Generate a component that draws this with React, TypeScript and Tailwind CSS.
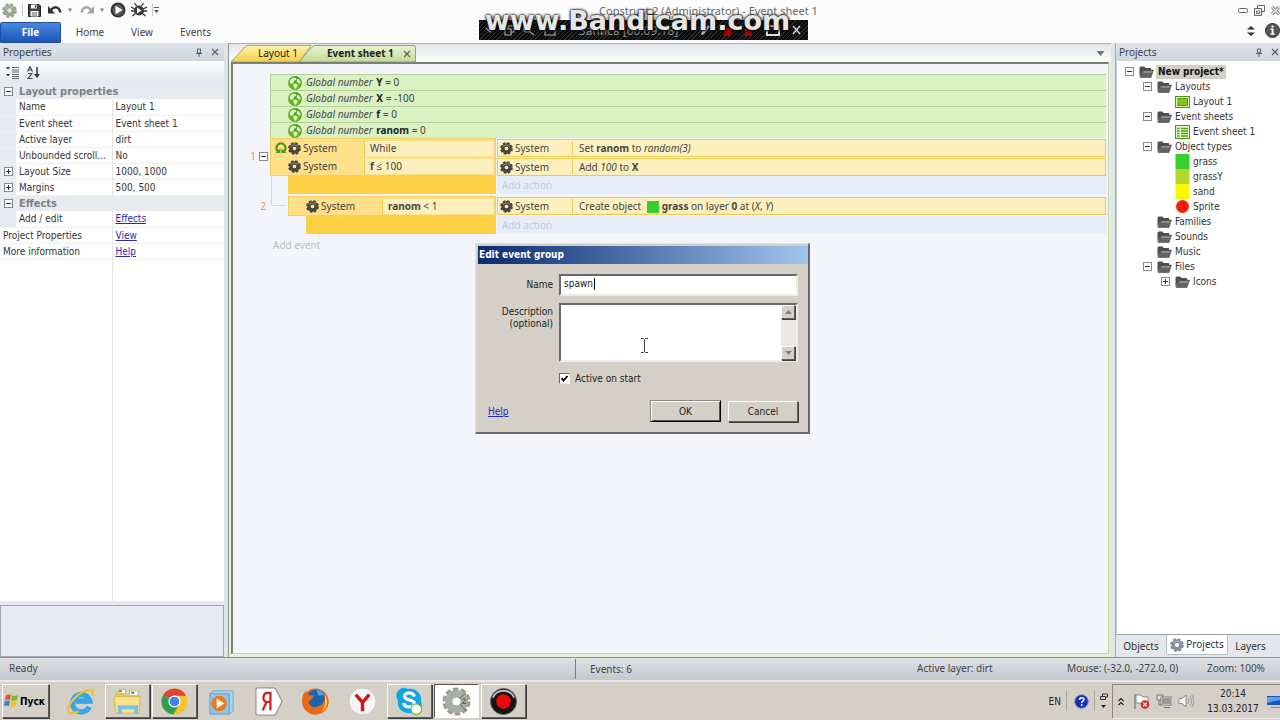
import React, { useState } from 'react';

const RAISED = 'border border-t-white border-l-white border-r-[#606060] border-b-[#606060] shadow-[1px_1px_0_#404040]';

function Gear({ size = 13, body = '#4a4540', hole = '#fdeab0' }: { size?: number; body?: string; hole?: string }) {
  return (
    <svg width={size} height={size} viewBox="0 0 26 26" className="shrink-0">
      <circle cx="13" cy="13" r="10.5" fill="none" stroke={body} strokeWidth="4.6" strokeDasharray="5 3.247" />
      <circle cx="13" cy="13" r="7" fill="none" stroke={body} strokeWidth="7" />
      <path d="M6.500 10a7.200 7.200 0 0 1 13 0" fill="none" stroke="#ffffff" strokeOpacity=".28" strokeWidth="2.400" />
      <circle cx="13" cy="13" r="3.400" fill={hole} />
    </svg>
  );
}

function Globe() {
  return (
    <svg width="14" height="14" viewBox="0 0 28 28" className="shrink-0">
      <defs><linearGradient id="globe" x2="0" y2="1"><stop stopColor="#3f8f1c" /><stop offset="1" stopColor="#6cc21c" /></linearGradient></defs>
      <circle cx="14" cy="14" r="13.300" fill="url(#globe)" stroke="#4b9a22" />
      <path d="M3 12C4 7 7 4 11 3l5 1 1 3-4 2-2 4-3 3-3-1z" fill="#e2f7c8" />
      <path d="M19 5l4 3 2 5-1 3-4-2-3-4zM13 15l5 1 2 3-3 4-3 3-2-4-2-4z" fill="#e2f7c8" />
    </svg>
  );
}

function Loop() {
  return (
    <svg width="12" height="12" viewBox="0 0 24 24" className="shrink-0">
      <path d="M8 20A9 9 0 1 1 16 20" fill="none" stroke="#4c9a14" strokeWidth="4.500" />
      <path d="M1 22h10v-9zM23 22H13v-9z" fill="#4c9a14" />
    </svg>
  );
}

function Folder() {
  return (
    <svg width="15" height="12" viewBox="0 0 30 24" className="shrink-0">
      <path d="M1 22V3l2-2h8l2 3h11v5H8z" fill="#4f4f4f" />
      <path d="M2 23L8 8h21l-5 15z" fill="#636363" stroke="#383838" />
      <path d="M9.500 10h17l-1.500 4H8z" fill="#8b8b8b" />
    </svg>
  );
}

function Expander({ open, label }: { open: boolean; label: string }) {
  return (
    <button aria-label={label} className="flex size-[9px] shrink-0 items-center justify-center border border-[#8a8a8a] bg-white">
      <svg width="5" height="5" viewBox="0 0 5 5">
        <path d={open ? 'M0 2.500h5' : 'M0 2.500h5M2.500 0v5'} stroke="#333" />
      </svg>
    </button>
  );
}

function Pin() {
  return (
    <svg width="8" height="9" viewBox="0 0 8 9">
      <path d="M2.500 1h3v4h-3zM1 5.500h6M4 6v3M5.500 1v4" fill="none" stroke="#5b6068" />
    </svg>
  );
}

function Cross({ size = 8, color = '#5b6068' }: { size?: number; color?: string }) {
  return (
    <svg width={size} height={size} viewBox="0 0 8 8">
      <path d="M1 1l6 6M7 1L1 7" stroke={color} strokeWidth="1.2" />
    </svg>
  );
}

function PanelHeader({ title }: { title: string }) {
  return (
    <header className="flex h-[18px] shrink-0 items-center gap-2 bg-linear-to-b from-[#dde2e8] to-[#cfd6dd] pl-[3px] pr-[5px] text-[#3c434c]">
      <h2 className="flex-1 whitespace-nowrap">{title}</h2>
      <button aria-label={`Pin ${title}`}><Pin /></button>
      <button aria-label={`Close ${title}`}><Cross /></button>
    </header>
  );
}

function TitleBar() {
  return (
    <div className="relative flex h-5 shrink-0 items-center pl-[2px] text-[#333]">
      <div className="flex items-center gap-[5px]">
        <Gear size={15} body="#9ba392" hole="#e4e8dc" />
        <span className="h-3 w-px bg-[#ccc]" />
        <button aria-label="Save">
          <svg width="13" height="13" viewBox="0 0 13 13">
            <path d="M.5.5h10.500l1.500 1.500v10.500H.5z" fill="#444" stroke="#222" />
            <path d="M3 .5h6v4H3zM2.500 7h8v5.500h-8z" fill="#f4f4f4" />
            <path d="M7 1.200h1.300v2.500H7z" fill="#333" />
            <path d="M4 9h5M4 11h5" stroke="#666" />
          </svg>
        </button>
        <button aria-label="Undo" className="pl-[2px]">
          <svg width="14" height="10" viewBox="0 0 14 10">
            <path d="M3 5c3-4 8-4 9.500 2.500" fill="none" stroke="#333" strokeWidth="2.400" />
            <path d="M0 1v7.500h7z" fill="#333" />
          </svg>
        </button>
        <span className="text-[6px] text-[#777]">▼</span>
        <button aria-label="Redo" className="pl-[2px]">
          <svg width="14" height="10" viewBox="0 0 14 10">
            <path d="M11 5C8 1 3 1 1.500 7.500" fill="none" stroke="#a5a5a5" strokeWidth="2.400" />
            <path d="M14 1v7.500H7z" fill="#a5a5a5" />
          </svg>
        </button>
        <span className="text-[6px] text-[#777]">▼</span>
        <button aria-label="Run layout">
          <svg width="16" height="16" viewBox="0 0 16 16">
            <circle cx="8" cy="8" r="7.500" fill="#333" />
            <circle cx="8" cy="8" r="5.500" fill="#5c5c5c" />
            <path d="M5.500 3.800v8.400l7-4.200z" fill="#fff" />
          </svg>
        </button>
        <button aria-label="Debug layout">
          <svg width="16" height="16" viewBox="0 0 16 16">
            <path d="M3.500 1l2 3M12.500 1l-2 3M0 5l4 2M16 5l-4 2M0 9h16M1.500 14l3.500-3M14.500 14L11 11" stroke="#333" strokeWidth="1.300" />
            <circle cx="8" cy="8.500" r="5" fill="#3d3d3d" />
            <path d="M6 5.500v6l4.500-3z" fill="#fff" />
          </svg>
        </button>
        <svg width="7" height="12" viewBox="0 0 7 12"><path d="M.5 0v12" stroke="#ccc" /><path d="M2 3.500h5" stroke="#555" /><path d="M2 6h5L4.500 9z" fill="#555" /></svg>
      </div>
      <h1 className="flex-1 pl-[20px] text-center text-[11px] text-[#666]">Construct 2 (Administrator) - Event sheet 1</h1>
      <div className="flex items-center gap-[6px]">
        <button aria-label="Minimize"><svg width="10" height="5" viewBox="0 0 10 5"><rect x=".5" y=".5" width="9" height="4" rx="1" fill="#fff" stroke="#666" /></svg></button>
        <button aria-label="Restore">
          <svg width="11" height="11" viewBox="0 0 11 11"><path d="M3.500 3V.5h7v6H8M.5 3.500h7v7h-7zM2.500 6h3v2.500h-3z" fill="none" stroke="#666" /></svg>
        </button>
        <button aria-label="Close">
          <svg width="9" height="9" viewBox="0 0 9 9"><path d="M1 1l7 7M8 1L1 8" stroke="#666" strokeWidth="3" /><path d="M1 1l7 7M8 1L1 8" stroke="#fff" strokeWidth="1.200" /></svg>
        </button>
      </div>
    </div>
  );
}

function Ribbon() {
  return (
    <nav className="flex h-[23px] shrink-0 items-stretch pt-[2px] text-[#444]">
      <button className="w-[61px] rounded-t-[2px] border border-[#1d4fa8] bg-linear-to-b from-[#4a86dc] to-[#1c55b8] font-bold text-white">File</button>
      <button className="w-[58px]">Home</button>
      <button className="w-[46px]">View</button>
      <button className="w-[61px]">Events</button>
      <span className="flex-1" />
      <div className="flex items-center gap-[10px] pb-1">
        <svg width="8" height="12" viewBox="0 0 8 12"><path d="M0 4.500h8L4 1zM0 7.500h8L4 11z" fill="#333" /></svg>
        <button aria-label="About">
          <svg width="15" height="15" viewBox="0 0 15 15">
            <circle cx="7.500" cy="7.500" r="7" fill="#555" stroke="#333" />
            <path d="M6.500 2.500h2v2h-2zM5.500 5.500h3v5h1.200v1.300H5.400v-1.300h1.200V6.800H5.500z" fill="#fff" />
          </svg>
        </button>
      </div>
    </nav>
  );
}

type Prop = { name: string; value?: string; kind?: 'group' | 'sub' | 'link' | 'flatlink' };
const PROPS: Prop[] = [
  { name: 'Layout properties', kind: 'group' },
  { name: 'Name', value: 'Layout 1' },
  { name: 'Event sheet', value: 'Event sheet 1' },
  { name: 'Active layer', value: 'dirt' },
  { name: 'Unbounded scroll...', value: 'No' },
  { name: 'Layout Size', value: '1000, 1000', kind: 'sub' },
  { name: 'Margins', value: '500, 500', kind: 'sub' },
  { name: 'Effects', kind: 'group' },
  { name: 'Add / edit', value: 'Effects', kind: 'link' },
  { name: 'Project Properties', value: 'View', kind: 'flatlink' },
  { name: 'More information', value: 'Help', kind: 'flatlink' },
];

function PropertiesPanel() {
  return (
    <aside className="flex w-[224px] shrink-0 flex-col bg-[#e7eaee]">
      <PanelHeader title="Properties" />
      <div className="flex h-[22px] shrink-0 items-center gap-2 bg-linear-to-b from-white to-[#e4e8ed] pl-[6px]">
        <button aria-label="Categorized">
          <svg width="13" height="13" viewBox="0 0 13 13"><path d="M0 1h4L2 3.500zM0 8h4L2 10.500z" fill="#333" /><path d="M6 1.500h7M6 4h7M6 6h7M6 8.500h7M6 10.500h7M6 12.500h7" stroke="#666" /></svg>
        </button>
        <button aria-label="Sort alphabetically">
          <svg width="13" height="13" viewBox="0 0 13 13"><path d="M.5 5.500L3 .5l2.500 5M1.500 4h3M1 7.500h4l-4 5h4.500" fill="none" stroke="#444" strokeWidth="1.200" /><path d="M10 1v8" stroke="#333" strokeWidth="1.500" /><path d="M7 8h6l-3 4z" fill="#333" /></svg>
        </button>
      </div>
      <div className="flex flex-1 flex-col bg-white font-['DejaVu_Sans_Condensed','DejaVu_Sans',sans-serif] text-[#333]">
        <table className="w-full table-fixed border-collapse">
          <colgroup><col className="w-4" /><col className="w-24" /><col /></colgroup>
          <tbody>
            {PROPS.map((p) =>
              p.kind === 'group' ? (
                <tr key={p.name} className="h-4 bg-[#e7eaee] text-[#7b8188]">
                  <td className="pl-1"><Expander open label={`Collapse ${p.name}`} /></td>
                  <th colSpan={2} className="pl-[3px] text-left text-[11px] leading-[15px]">{p.name}</th>
                </tr>
              ) : p.kind === 'flatlink' ? (
                <tr key={p.name} className="h-4 border-b border-[#eef0f2]">
                  <td colSpan={2} className="pl-[3px] leading-[15px]">{p.name}</td>
                  <td className="border-l border-[#e2e5e8] pl-[3px] leading-[15px]"><a href="#" className="text-[#2a2ab0] underline">{p.value}</a></td>
                </tr>
              ) : (
                <tr key={p.name} className="h-4 border-b border-[#eef0f2]">
                  <td className="bg-[#e7eaee] pl-1">{p.kind === 'sub' && <Expander open={false} label={`Expand ${p.name}`} />}</td>
                  <td className="whitespace-nowrap pl-[3px] leading-[15px]">{p.name}</td>
                  <td className="border-l border-[#e2e5e8] pl-[3px] leading-[15px]">
                    {p.kind === 'link' ? <a href="#" className="text-[#2a2ab0] underline">{p.value}</a> : p.value}
                  </td>
                </tr>
              ),
            )}
          </tbody>
        </table>
        <div className="ml-28 flex-1 border-l border-[#e2e5e8]" />
      </div>
      <div className="mt-1 h-[52px] shrink-0 border border-[#a3a9b0] bg-[#e7eaee]" />
    </aside>
  );
}

function Action({ children }: { children: React.ReactNode }) {
  return (
    <div className="flex h-[18px] items-center border border-[#ecc954] bg-[#fdf0bd]">
      <span className="flex w-[74px] items-center gap-[2px] pl-[2px]"><Gear />System</span>
      <span className="block h-[14px] flex-1 whitespace-pre border-l border-[#ecc954] pl-[6px] leading-[14px]">{children}</span>
    </div>
  );
}

function Condition({ loop, children }: { loop?: boolean; children: React.ReactNode }) {
  return (
    <div className="flex h-[18px] items-center">
      <span className="flex h-full w-[93px] items-center pl-1">
        <span className="w-[13px]">{loop && <Loop />}</span>
        <Gear hole="#ffe398" />
        <span className="pl-[2px]">System</span>
      </span>
      <span className="mr-px block h-[17px] flex-1 whitespace-pre border border-[#fbe08c] border-l-[#ecc954] bg-[#fdf0bd] pl-[5px] leading-[15px]">{children}</span>
    </div>
  );
}

function AddAction() {
  return (
    <button className="block h-[18px] w-full bg-[#e6edf8] pl-[5px] text-left text-[#c3ccd8]">Add action</button>
  );
}

const GLOBALS = [['Y', '0'], ['X', '-100'], ['f', '0'], ['ranom', '0']];

function EventSheet() {
  return (
    <main className="flex min-w-0 flex-1 flex-col border-l border-[#8b949e] bg-[#e9f0d8]">
      <div className="flex h-[19px] shrink-0 items-end border-t border-[#a9afb7] bg-linear-to-b from-[#e2e5ea] to-white pl-[2px] pr-[6px] text-[#222]">
        <div role="tablist" className="flex">
          <button role="tab" aria-selected="false" className="relative h-[17px] w-[84px]">
            <svg width="84" height="17" viewBox="0 0 84 17" className="absolute inset-0">
              <defs><linearGradient id="tabY" x2="0" y2="1"><stop stopColor="#fff3a8" /><stop offset="1" stopColor="#f4ce4a" /></linearGradient></defs>
              <path d="M0 17L14 2Q15 .5 17 .5H80L68 17z" fill="url(#tabY)" stroke="#a8a27c" />
            </svg>
            <span className="relative pl-[10px]">Layout 1</span>
          </button>
          <button role="tab" aria-selected="true" className="relative -ml-4 h-[17px] w-[117px] text-left">
            <svg width="117" height="17" viewBox="0 0 117 17" className="absolute inset-0">
              <defs><linearGradient id="tabG" x2="0" y2="1"><stop stopColor="#e8f6cd" /><stop offset="1" stopColor="#c2d89c" /></linearGradient></defs>
              <path d="M0 17L13 2Q14 .5 16 .5H114q2.500 0 2.500 2V17z" fill="url(#tabG)" stroke="#94a07f" />
            </svg>
            <span className="relative flex items-center justify-between pl-[28px] pr-[5px] font-bold">Event sheet 1 <Cross size={8} /></span>
          </button>
        </div>
        <span className="flex-1" />
        <svg width="9" height="5" viewBox="0 0 8 5" className="mb-[6px]"><path d="M0 0h8L4 5z" fill="#6d737b" /></svg>
      </div>
      <div className="mx-[2px] mb-[3px] flex-1 border-l-2 border-t-2 border-r border-b border-[#7a8275] border-b-[#c4cfb4] border-r-[#c4cfb4] bg-[#f3f5fb] pt-[10px] pr-[2px] text-[#444]">
        <div className="ml-[37px] border-l border-[#b8d29c]">
          {GLOBALS.map(([n, v]) => (
            <div key={n} className="flex h-4 items-center gap-1 border-t border-[#b3d396] bg-[#d9f1c3] pl-[17px]">
              <Globe />
              <span className="whitespace-pre"><i>Global number</i>{' '}<b className="pl-px text-[#222]">{n}</b>{' = '}{v}</span>
            </div>
          ))}
        </div>
        <div className="flex">
          <div className="flex w-[37px] shrink-0 items-center justify-end gap-[3px] pr-[2px] pb-[22px] text-[#d7a33e]">
            1<Expander open label="Collapse event 1" />
          </div>
          <div className="w-[226px] shrink-0">
            <div className="h-[38px] border border-[#f4cd5c] bg-[#fedf8a]">
              <Condition loop>While</Condition>
              <Condition><b>f</b> ≤ 100</Condition>
            </div>
            <div className="ml-px h-5 border-l border-[#d4d7dc] pl-4"><div className="h-[18px] bg-[#fdd045]" /></div>
          </div>
          <div className="ml-px flex min-w-0 flex-1 flex-col">
            <div className="flex h-[38px] flex-col gap-px pt-px">
              <Action>Set <b>ranom</b> to <i>random(3)</i></Action>
              <Action>Add <i>100</i> to <b>X</b></Action>
            </div>
            <AddAction />
          </div>
        </div>
        <div className="flex">
          <div className="w-[37px] shrink-0 pr-1 text-right leading-5 text-[#d7a33e]">2</div>
          <div className="ml-px mr-[2px] h-[10px] w-[15px] shrink-0 border-b border-l border-[#d4d7dc]" />
          <div className="w-[208px] shrink-0">
            <div className="border border-[#f4cd5c] bg-[#fedf8a]"><Condition><b>ranom</b>{' < 1'}</Condition></div>
            <div className="ml-[18px] h-[18px] bg-[#fdd045]" />
          </div>
          <div className="ml-px min-w-0 flex-1">
            <div className="h-5 py-px">
              <Action>Create object <span className="mx-[3px] inline-block size-3 bg-[#37cf2d] align-middle" /><b>grass</b> on layer <b>0</b> at (<i>X</i>, <i>Y</i>)</Action>
            </div>
            <AddAction />
          </div>
        </div>
        <button className="ml-10 mt-1 text-[#b9bfc9]">Add event</button>
      </div>
    </main>
  );
}

type Node = { depth: number; label: string; icon: string; open?: boolean };
const TREE: Node[] = [
  { depth: 0, label: 'New project*', icon: 'folder', open: true },
  { depth: 1, label: 'Layouts', icon: 'folder', open: true },
  { depth: 2, label: 'Layout 1', icon: 'layout' },
  { depth: 1, label: 'Event sheets', icon: 'folder', open: true },
  { depth: 2, label: 'Event sheet 1', icon: 'sheet' },
  { depth: 1, label: 'Object types', icon: 'folder', open: true },
  { depth: 2, label: 'grass', icon: '#37cf2d' },
  { depth: 2, label: 'grassY', icon: '#b2d82c' },
  { depth: 2, label: 'sand', icon: '#f8f800' },
  { depth: 2, label: 'Sprite', icon: 'ball' },
  { depth: 1, label: 'Families', icon: 'folder' },
  { depth: 1, label: 'Sounds', icon: 'folder' },
  { depth: 1, label: 'Music', icon: 'folder' },
  { depth: 1, label: 'Files', icon: 'folder', open: true },
  { depth: 2, label: 'Icons', icon: 'folder', open: false },
];
const INDENT = ['pl-2', 'pl-[26px]', 'pl-11'];

function TreeIcon({ icon }: { icon: string }) {
  if (icon === 'folder') return <Folder />;
  if (icon === 'layout')
    return <svg width="15" height="12" viewBox="0 0 15 12"><rect x=".5" y=".5" width="14" height="11" fill="#d6f2a8" stroke="#4c9420" /><rect x="3" y="2.500" width="9.500" height="7" fill="#85c31c" stroke="#579a12" /></svg>;
  if (icon === 'sheet')
    return <svg width="15" height="14" viewBox="0 0 15 14"><rect x=".5" y=".5" width="14" height="13" fill="#e6f8cc" stroke="#4c9420" /><path d="M2 3.500h2.500M6 3.500h7M2 6h2.500M6 6h7M2 8.500h2.500M6 8.500h7M2 11h2.500M6 11h7" stroke="#4f9e14" strokeWidth="1.400" /></svg>;
  if (icon === 'ball')
    return <svg width="15" height="15" viewBox="0 0 15 15"><circle cx="7.500" cy="7.500" r="6.500" fill="#f0200c" /><circle cx="8.500" cy="5" r="1" fill="#a80d00" /><circle cx="9.500" cy="9" r=".8" fill="#a80d00" /></svg>;
  return <svg width="15" height="15" viewBox="0 0 15 15"><path d="M.5 0h14v15H.5z" fill={icon} /></svg>;
}

function ProjectsPanel() {
  return (
    <aside className="flex w-[165px] shrink-0 flex-col border-l border-[#a3abb5] bg-[#e4e8ec]">
      <div className="-mr-1"><PanelHeader title="Projects" /></div>
      <ul className="flex-1 border-b border-[#9aa1a9] border-l border-l-[#c3c9d0] bg-white pt-[3px] font-['DejaVu_Sans_Condensed','DejaVu_Sans',sans-serif] text-[#333]">
        {TREE.map((n) => (
          <li key={n.label} className={`flex h-[15px] items-center ${INDENT[n.depth]}`}>
            <span className="flex w-[14px] shrink-0">{n.open !== undefined && <Expander open={n.open} label={`Toggle ${n.label}`} />}</span>
            <TreeIcon icon={n.icon} />
            {n.depth === 0 ? (
              <strong className="ml-[2px] whitespace-nowrap bg-[#d2cfc9] px-[2px] leading-[14px] text-[#111]">{n.label}</strong>
            ) : (
              <span className="ml-[3px] whitespace-nowrap">{n.label}</span>
            )}
          </li>
        ))}
      </ul>
      <div role="tablist" className="flex h-[22px] shrink-0 items-start text-[#333]">
        <button role="tab" className="h-[22px] w-[50px]">Objects</button>
        <button role="tab" aria-selected="true" className="flex h-[20px] w-[62px] items-center justify-center gap-[2px] rounded-b-[2px] border border-t-0 border-[#b6bbc2] bg-white">
          <Gear size={14} body="#8a8aa4" hole="#fff" />Projects
        </button>
        <button role="tab" className="h-[22px] w-[45px]">Layers</button>
      </div>
    </aside>
  );
}

function EditGroupDialog() {
  const [name, setName] = useState('spawn');
  const [desc, setDesc] = useState('');
  const [active, setActive] = useState(true);
  const sunken = 'border-2 border-t-[#6a6a6a] border-l-[#6a6a6a] border-r-[#efece6] border-b-[#efece6]';
  return (
    <section role="dialog" aria-labelledby="dlg-title" className="absolute left-[475px] top-[243px] w-[335px] border border-[#e4e1da] border-r-2 border-b-2 border-r-[#6a6a6a] border-b-[#6a6a6a] bg-[#d4d0c8] p-[2px] pb-[10px] pr-0 font-['DejaVu_Sans_Condensed','DejaVu_Sans',sans-serif] text-[#222]">
      <h2 id="dlg-title" className="h-[18px] bg-linear-to-r from-[#0d2a70] to-[#a3c6ee] pl-px leading-[18px] font-bold text-white">Edit event group</h2>
      <form className="pl-[9px] pr-[10px] pt-[10px]" onSubmit={(e) => e.preventDefault()}>
        <div className="grid grid-cols-[66px_1fr] gap-x-[6px] gap-y-[7px]">
          <label htmlFor="g-name" className="pt-[3px] text-right">Name</label>
          <div className="relative">
            <input id="g-name" value={name} onChange={(e) => setName(e.target.value)} className={`block h-[22px] w-full rounded-none bg-white px-[3px] pb-[3px] outline-none ${sunken}`} />
            <span className="absolute left-[35px] top-1 h-3 w-px bg-black" />
          </div>
          <label htmlFor="g-desc" className="pt-[3px] text-right leading-3">Description<br />(optional)</label>
          <div className={`flex h-[59px] bg-white ${sunken}`}>
            <textarea id="g-desc" value={desc} onChange={(e) => setDesc(e.target.value)} className="block flex-1 resize-none overflow-hidden outline-none" />
            <div className="flex w-[15px] flex-col justify-between bg-[#ebe9e4]">
              <button type="button" aria-label="Scroll up" className={`flex h-[14px] w-[14px] items-center justify-center bg-[#d4d0c8] ${RAISED}`}><svg width="7" height="4" viewBox="0 0 7 4"><path d="M0 4h7L3.500 0z" fill="#808080" /></svg></button>
              <button type="button" aria-label="Scroll down" className={`flex h-[14px] w-[14px] items-center justify-center bg-[#d4d0c8] ${RAISED}`}><svg width="7" height="4" viewBox="0 0 7 4"><path d="M0 0h7L3.500 4z" fill="#808080" /></svg></button>
            </div>
          </div>
          <span />
          <label className="flex items-center gap-[5px] pt-[2px]">
            <input type="checkbox" checked={active} onChange={(e) => setActive(e.target.checked)} className="peer size-[11px] appearance-none border border-[#efece6] border-l-[#6a6a6a] border-t-[#6a6a6a] bg-white" />
            <svg width="9" height="9" viewBox="0 0 9 9" className="-ml-[15px] mr-[1px] hidden peer-checked:block"><path d="M1.500 4l2 2.500L7.500 2" fill="none" stroke="#000" strokeWidth="1.800" /></svg>
            Active on start
          </label>
        </div>
        <div className="flex items-center gap-[7px] pl-px pt-[14px]">
          <a href="#" className="flex-1 text-[#2a2ab0] underline">Help</a>
          <button type="submit" className="h-[22px] w-[71px] border border-[#888] border-b-black border-r-black bg-[#d4d0c8] shadow-[inset_1px_1px_0_#fff,inset_-1px_-1px_0_#555]">OK</button>
          <button type="button" className={`h-[21px] w-[70px] bg-[#d4d0c8] ${RAISED}`}>Cancel</button>
        </div>
      </form>
    </section>
  );
}

function RecorderOverlay() {
  return (
    <div className="absolute inset-x-0 top-[2px] flex justify-center pl-[7px]">
      <div className="relative mt-[18px] flex h-5 w-[329px] items-center justify-between bg-[repeating-linear-gradient(135deg,#0a0a0a_0_2px,#2b2b2b_2px_3px)] px-[6px] text-[#8a8a8a]">
        <svg width="72" height="14" viewBox="0 0 72 14" fill="none" stroke="#aaa" strokeWidth="1.200">
          <path d="M1 5l4 4 4-4M20 6h6v6h-6zM23 6V3h6v6h-3M44 8l5 4M60 4h10v8H60z" /><circle cx="42" cy="5.500" r="3.500" />
        </svg>
        <span className="text-[12px]">Запись [00:09:18]</span>
        <svg width="102" height="14" viewBox="0 0 102 14">
          <path d="M1 12l1-4 6-6 2 2-6 7z" fill="#ccc" /><path d="M24 5h7v8h-7zM45 5h7v8h-7z" fill="#a00" />
          <rect x="67" y="3" width="12" height="9" fill="none" stroke="#ddd" strokeWidth="2" /><path d="M93 3l7 8M100 3l-7 8" stroke="#ddd" strokeWidth="1.300" />
        </svg>
        <p className="absolute inset-x-0 -top-[15px] pr-3 text-center font-['DejaVu_Sans',sans-serif] text-[27px] leading-8 font-bold text-[#e6e6e6] [text-shadow:0_0_3px_#000,1px_1px_3px_#000,0_0_2px_#333]">www.Bandicam.com</p>
      </div>
    </div>
  );
}

function StatusBar() {
  return (
    <footer className="flex h-[23px] shrink-0 items-center border-t border-[#8b9199] bg-linear-to-b from-[#dfe2e6] to-[#c3c8ce] pb-px text-[#3d444c]">
      <span className="w-[575px] pl-[9px]">Ready</span>
      <span className="flex-1 border-l border-[#777e87] pl-[14px] leading-5">Events: 6</span>
      <span className="w-[150px]">Active layer: dirt</span>
      <span className="w-[140px]">Mouse: (-32.0, -272.0, 0)</span>
      <span className="w-[73px]">Zoom: 100%</span>
    </footer>
  );
}

const APPS: { label: string; state: 'idle' | 'open' | 'active'; icon: React.ReactNode }[] = [
  { label: 'Internet Explorer', state: 'idle', icon: <><path d="M24 20.500A9 9 0 1 1 24.500 14.500H10" fill="none" stroke="#35a6e6" strokeWidth="5.500" /><path d="M3 27C-1 20 12 4 26 3c3 1 2 4 0 6M3 27c3 2 8-1 10-2" fill="none" stroke="#efc02c" strokeWidth="2.400" /></> },
  { label: 'Explorer', state: 'open', icon: <><path d="M2 5h9l2 3h15v19H2z" fill="#e7c65a" /><path d="M5 3h8v4H5zM17 4h9v5h-9z" fill="#fff" stroke="#c9a940" strokeWidth=".8" /><path d="M6 3.500h3v2H6z" fill="#3c9a3c" /><path d="M19 5h3v2h-3z" fill="#3c78c8" /><path d="M1 10h27l-1 17H3z" fill="#f8e38d" stroke="#d8b850" /><path d="M7 28v-7h17v7" fill="none" stroke="#7cc0ec" strokeWidth="4" /></> },
  { label: 'Chrome', state: 'open', icon: <><circle cx="15" cy="15" r="13.500" fill="#f6c52b" /><path d="M15 15L3.300 8.300A13.500 13.500 0 0 1 26.700 8.300L27 9H15z" fill="#df4536" /><path d="M3.300 8.300A13.500 13.500 0 0 0 14 28.500l6-11L15 15z" fill="#2f9e51" /><circle cx="15" cy="15" r="6.300" fill="#fff" /><circle cx="15" cy="15" r="5" fill="#4382ee" /></> },
  { label: 'Media Player', state: 'idle', icon: <><path d="M3 7l4-3h20v21l-4 3" fill="#a8d3ee" stroke="#6fa9d0" /><path d="M3 7h20v21H3z" fill="#8ec5ea" stroke="#5f9fcc" /><circle cx="12.500" cy="17" r="8" fill="#ef7a1c" /><path d="M10 12v10l8-5z" fill="#fff" /></> },
  { label: 'Yandex', state: 'idle', icon: <><path d="M2 3q0-2 2-2h16q2 0 3 2l6 12-6 12q-1 2-3 2H4q-2 0-2-2z" fill="#fff" stroke="#999" strokeWidth="1.300" /><path d="M17 24V6h-3c-5 0-6 9-1 9.500h4M13 15.500L9 24" fill="none" stroke="#d01f1f" strokeWidth="2.300" /></> },
  { label: 'Firefox', state: 'idle', icon: <><circle cx="15" cy="15" r="13.500" fill="#e8641b" /><circle cx="16" cy="12" r="9.500" fill="#1d63ae" /><path d="M16 3a9 9 0 0 1 8 5l-6 1z" fill="#4ba7e0" /><path d="M2 8l3-4 2 4 6 1-2 4-3 2c0 5 6 8 12 4 5-3 5-9 4-12 5 5 6 12 1 17-6 6-16 6-21-1-4-5-3-10-2-15z" fill="#ea6a1a" /><path d="M24 7c5 6 4 15-3 19 4-6 5-12 3-19z" fill="#f9c83a" /></> },
  { label: 'Yandex Browser', state: 'idle', icon: <><circle cx="15" cy="15" r="14" fill="#f6f6f6" stroke="#c6c6c6" /><path d="M8 8l7 8 7-8M15 15v10" fill="none" stroke="#d3151b" strokeWidth="3.500" /></> },
  { label: 'Skype', state: 'open', icon: <><path d="M8 1a7 7 0 0 1 5 1c9-1 15 5 14 13 3 7-3 15-10 12C8 28 2 23 3 14-1 8 3 2 8 1z" fill="#12a5e4" /><path d="M20 10c-1-5-10-5-10-.5 0 5 10 3 10 7.500 0 5-10 5-11-.5" fill="none" stroke="#fff" strokeWidth="3.300" /><circle cx="22" cy="23" r="5.500" fill="#fff" stroke="#74b62c" strokeWidth="1.200" /></> },
  { label: 'Construct 2', state: 'active', icon: <><circle cx="15" cy="15" r="12.500" fill="none" stroke="#989d92" strokeWidth="4" strokeDasharray="5.500 2.354" /><circle cx="15" cy="15" r="8" fill="none" stroke="#a9aea3" strokeWidth="8" /><path d="M17 13l8-7M18 17l7 8" stroke="#62665c" /><path d="M21 13q3-2 3 .5l-3 3.500h4" fill="none" stroke="#555" /><circle cx="15" cy="15" r="4" fill="#fff" /></> },
  { label: 'Bandicam', state: 'open', icon: <><circle cx="15" cy="15" r="13.500" fill="#141414" stroke="#666" /><path d="M4 11a12 12 0 0 1 22 0" fill="none" stroke="#bbb" strokeWidth="2" /><circle cx="15" cy="15" r="7.500" fill="#ee0808" /></> },
];
const APP_STATE = {
  idle: 'border border-transparent',
  open: RAISED,
  active: 'border border-[#555] border-r-white border-b-white bg-white',
};

function Taskbar() {
  return (
    <div className="flex h-[40px] shrink-0 items-center border-t-2 border-[#ebe8e2] bg-[#d4d0c8] pl-[2px] font-['DejaVu_Sans_Condensed','DejaVu_Sans',sans-serif] text-[#222]">
      <button className={`mr-[9px] flex h-[34px] w-[47px] items-center gap-px pl-px font-bold text-black ${RAISED}`}>
        <svg width="15" height="14" viewBox="0 0 15 14" className="shrink-0">
          <path d="M2 1q3-1 5 0L6 6Q4 5 1 6z" fill="#e4572a" /><path d="M8 1.500q3 1 6-.5l-1 5q-3 1.500-6 .3z" fill="#7ab82e" /><path d="M.8 7q3-1 5 0l-1 5q-2-1-5 0z" fill="#3b82d8" /><path d="M6.800 7.500q3 1 6-.5l-1 5q-3 1.500-6 .3z" fill="#f4bf2a" />
        </svg>
        <span>Пуск</span>
      </button>
      <div className="flex gap-[2px]">
        {APPS.map((a) => (
          <button key={a.label} aria-label={a.label} className={`flex h-[34px] w-[45px] items-center justify-center ${APP_STATE[a.state]}`}>
            <svg width="29" height="29" viewBox="0 0 30 30">{a.icon}</svg>
          </button>
        ))}
      </div>
      <span className="flex-1" />
      <div className="flex items-center gap-[5px] pr-1">
        <span>EN</span>
        <span className="h-5 w-px bg-[#aaa69e]" />
        <svg width="15" height="15" viewBox="0 0 15 15" className="ml-[2px]"><circle cx="7.500" cy="7.500" r="6.800" fill="#1530b0" stroke="#7c8cc8" /><path d="M5.500 6c0-3 4.500-3 4.500-.5 0 1.500-2.300 1.500-2.300 3.500M7.700 10v2" fill="none" stroke="#fff" strokeWidth="1.500" /></svg>
        <span className="h-5 w-px bg-[#aaa69e]" />
        <svg width="8" height="16" viewBox="0 0 8 16"><path d="M2.500 3V1h5v3H6M.5 3.500h5v3h-5z" fill="none" stroke="#333" /><path d="M1 12h5l-2.500 3z" fill="#222" /></svg>
      </div>
      <div className="flex h-[35px] items-center gap-[6px] border border-t-[#8c8880] border-l-[#8c8880] border-r-0 border-[#f2f0ec] pl-[5px]">
        <svg width="6" height="9" viewBox="0 0 6 9"><path d="M.5 4L3 1.500 5.500 4M.5 8L3 5.500 5.500 8" fill="none" stroke="#222" strokeWidth="1.200" /></svg>
        <svg width="16" height="15" viewBox="0 0 16 15" className="ml-1"><path d="M1 0v15" stroke="#888" strokeWidth="1.500" /><path d="M2 1h5l2 2h5v7H8L6 9H2z" fill="#fff" stroke="#888" /><circle cx="11" cy="10.500" r="4.300" fill="#dc2626" /><path d="M9.300 8.800l3.400 3.400M12.700 8.800l-3.400 3.400" stroke="#fff" strokeWidth="1.400" /></svg>
        <svg width="16" height="15" viewBox="0 0 16 15"><path d="M1 1h6v5H1zM3 6v5h2" fill="#ddd" stroke="#777" /><path d="M5.500 3.500h10v7h-10z" fill="#9a9a9a" stroke="#fff" /><path d="M5 3h11v8H5zM8 13.500h6" fill="none" stroke="#777" /></svg>
        <svg width="16" height="14" viewBox="0 0 16 14"><path d="M1 4.500h3L8 1v12L4 9.500H1z" fill="#fff" stroke="#888" /><path d="M10 4.500q2 2.500 0 5M12 2.500q3.500 4.500 0 9M14 1q4 6 0 12" fill="none" stroke="#999" /></svg>
        <div className="w-[66px] text-center leading-[15px]"><div>20:14</div><div>13.03.2017</div></div>
        <svg width="13" height="14" viewBox="0 0 13 14" className="-ml-[5px]"><path d="M0 2h13v9H0z" fill="#1c57b4" /><path d="M0 3h13v3L0 9z" fill="#5ba0ea" /><path d="M4 13.500h9" stroke="#888" /></svg>
      </div>
    </div>
  );
}

export default function App() {
  return (
    <div className="relative flex h-screen w-full flex-col overflow-hidden bg-[#fcfcfd] font-['Noto_Sans','Open_Sans',sans-serif] text-[10px] leading-[15px]">
      <TitleBar />
      <Ribbon />
      <div className="flex min-h-0 flex-1 gap-[4px] bg-[#dfe5e4]">
        <PropertiesPanel />
        <EventSheet />
        <ProjectsPanel />
      </div>
      <StatusBar />
      <Taskbar />
      <EditGroupDialog />
      <svg width="7" height="15" viewBox="0 0 7 15" className="pointer-events-none absolute left-[641px] top-[338px]"><path d="M0 .5h2.500l1 1 1-1H7M3.500 1.500v12M0 14.500h2.500l1-1 1 1H7" fill="none" stroke="#444" /></svg>
      <RecorderOverlay />
    </div>
  );
}
